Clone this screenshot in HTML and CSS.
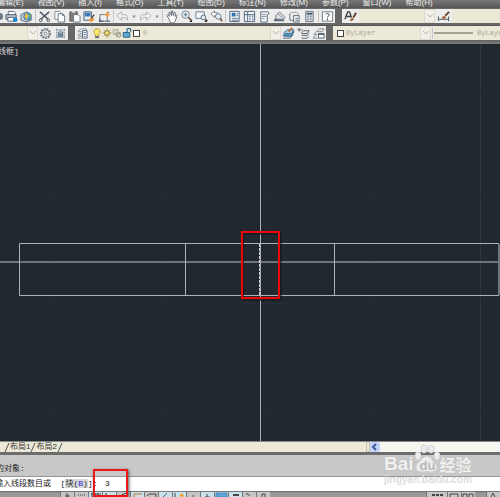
FILE: index.html
```html
<!DOCTYPE html>
<html lang="zh-CN">
<head>
<meta charset="utf-8">
<title>CAD</title>
<link rel="stylesheet" href="styles.css">
</head>
<body>
<svg class="defs" aria-hidden="true">
  <symbol id="print" viewBox="0 0 14 14"><path d="M3.5 5V1.500h6l1.500 1.500V5" fill="#fff" stroke="#536474"/><path d="M1 5h11v5H1z" fill="#bac5d0" stroke="#465564"/><path d="M3 8h7v4H3z" fill="#fff" stroke="#596774"/><circle cx="11" cy="10.500" r="2.500" fill="#1688cf"/></symbol>
  <symbol id="publish" viewBox="0 0 14 14"><path d="M1 5l6-3 5 3v6l-5 2-6-2z" fill="#c6d3df" stroke="#556b81"/><circle cx="8" cy="7" r="4" fill="#48a5d5" stroke="#477493"/><path d="M6 3l3 3-2 5-2-4z" fill="#f2b94a"/><path d="M9 4l3 2-2 3z" fill="#77ba55"/></symbol>
  <symbol id="cut" viewBox="0 0 14 14"><path d="M2 2l9 8M12 2l-9 8" stroke="#4c545d" stroke-width="1.500"/><circle cx="3" cy="11" r="1.500" fill="none" stroke="#4c545d"/><circle cx="11" cy="11" r="1.500" fill="none" stroke="#4c545d"/></symbol>
  <symbol id="copy" viewBox="0 0 14 14"><path d="M2 1.500h5l1 1V10H2z" fill="#fff" stroke="#7c8791"/><path d="M5.500 4h5l2 2v7h-7z" fill="#fff" stroke="#687783"/><path d="M10 4v2h2" fill="none" stroke="#687783"/></symbol>
  <symbol id="paste" viewBox="0 0 14 14"><path d="M2 2h8v10H2z" fill="#857a71" stroke="#625d59"/><path d="M4 1h4v2H4z" fill="#cdd6df"/><path d="M6 5h5l2 2v6H6z" fill="#fff" stroke="#687783"/></symbol>
  <symbol id="match" viewBox="0 0 14 14"><path d="M1 2h8v9H1z" fill="#e7edf2" stroke="#3d5872"/><path d="M2 3h6v4H2z" fill="#3d79b9"/><path d="M5 11l5-3 3 2-4 3z" fill="#ed963c"/><path d="M9 9l3-4" stroke="#494744" stroke-width="1.500"/></symbol>
  <symbol id="block" viewBox="0 0 14 14"><path d="M2 5h8v7H2z" fill="#edf1f6" stroke="#667382"/><path d="M1 12h5M2 9v4M8 5l4-3M9 12h4" stroke="#394f64"/><path d="M10 1l1 3 3 1-3 1-1 3-1-3-3-1 3-1z" fill="#ef9a39"/></symbol>
  <symbol id="undo" viewBox="0 0 14 14"><path d="M1 6l5-4v3h3c3 0 4 2 3 6-1-3-3-3-6-3v3z" fill="#f3f3f3" stroke="#a7afb7"/></symbol>
  <symbol id="redo" viewBox="0 0 14 14"><path d="M13 6L8 2v3H5c-3 0-4 2-3 6 1-3 3-3 6-3v3z" fill="#f3f3f3" stroke="#a7afb7"/></symbol>
  <symbol id="caret" viewBox="0 0 6 14"><path d="M1 6h4L3 9z" fill="#899096"/></symbol>
  <symbol id="hand" viewBox="0 0 14 14"><path d="M4 9L2 6l1-1 2 2-1-4 1-1 2 4V1h1l1 5 1-4 1 1v4l1-2 1 1-2 6-2 2H6z" fill="#fff" stroke="#636a71"/></symbol>
  <symbol id="zoomin" viewBox="0 0 14 14"><circle cx="6" cy="5" r="4" fill="#e9f2f8" stroke="#707e8c"/><path d="M4 5h4M6 3v4" stroke="#526b80"/><path d="M9 8l3 3" stroke="#775f4d" stroke-width="2"/><path d="M10 13h3v-3z" fill="#222"/></symbol>
  <symbol id="zoomwin" viewBox="0 0 14 14"><path d="M1 2h9v7H1z" fill="#f5f8fb" stroke="#66798c"/><circle cx="9" cy="8" r="2.500" fill="#e2eef7" stroke="#53677b"/><path d="M11 10l2 2" stroke="#775f4d" stroke-width="2"/><path d="M10 13h3v-3z" fill="#222"/></symbol>
  <symbol id="zoomprev" viewBox="0 0 14 14"><path d="M1 4l4-3v2h3v3H5v2z" fill="#fff" stroke="#707b84"/><circle cx="9" cy="7" r="3" fill="#e4f0fa" stroke="#64788a"/><path d="M11 9l2 3" stroke="#775f4d" stroke-width="2"/></symbol>
  <symbol id="props" viewBox="0 0 14 14"><path d="M2 1.500h10v11H2z" fill="#f4f7fa" stroke="#4d6178"/><path d="M4 3h4v4H4z" fill="#296fac"/><path d="M9 4h2M9 6h2M4 9h7M4 11h7" stroke="#60758a"/></symbol>
  <symbol id="center" viewBox="0 0 14 14"><path d="M1.500 1.500h11v11h-11zM5 2v10M1 5h11" fill="#f0f4f8" stroke="#4d6178"/><path d="M7 7h1M10 7h1M7 10h1M10 10h1" stroke="#3d6587" stroke-width="2"/></symbol>
  <symbol id="palette" viewBox="0 0 14 14"><path d="M3 2h8l1 2-2 1v8H3z" fill="#f2f4f6" stroke="#5d6c7b"/><path d="M4 5h5M4 7h5M4 9h3" stroke="#8293a2"/></symbol>
  <symbol id="sheets" viewBox="0 0 14 14"><path d="M3 6l4-4 6 6-2 2H3z" fill="#dbe1e6" stroke="#6b7884"/><path d="M5 4l6 5" stroke="#8795a1"/><path d="M1 10c3-2 7 1 11 0v2H1z" fill="#606d79"/></symbol>
  <symbol id="markup" viewBox="0 0 14 14"><path d="M2 4l2-2 2 1 3-1 2 2v3" fill="none" stroke="#737c84" stroke-dasharray="2 1"/><path d="M2 4v7h4M6 6h6v7H6z" fill="#edf2f5" stroke="#5e6a76"/><path d="M8 9h3M8 11h3" stroke="#536e86"/></symbol>
  <symbol id="calc" viewBox="0 0 14 14"><path d="M3 1.500h8v11H3z" fill="#dce2e8" stroke="#65717d"/><path d="M4 4h6" stroke="#405567" stroke-width="2"/><path d="M5 7h1M8 7h1M5 10h1M8 10h1" stroke="#4d5d6c" stroke-width="2"/></symbol>
  <symbol id="help" viewBox="0 0 14 14"><path d="M1.500 2h11v10h-11z" fill="#fff" stroke="#6b7680"/><path d="M5 5c1-2 4-1 4 0 0 2-2 1-2 3M7 9v2" fill="none" stroke="#354758"/></symbol>
  <symbol id="brush" viewBox="0 0 14 14"><path d="M1 10l3-8h2l2 6M3 7h4" fill="none" stroke="#393e43" stroke-width="1.500"/><path d="M6 11l3-3 2 2-3 2z" fill="#a6673a"/><path d="M10 8l3-5" stroke="#653d2a" stroke-width="2"/></symbol>
  <symbol id="dimbrush" viewBox="0 0 14 14"><path d="M1.500 7v5M12.500 7v5M2 10h10" stroke="#434c53"/><path d="M5 8l3-2 2 2-3 2z" fill="#a6673a"/><path d="M9 6l4-4" stroke="#653d2a" stroke-width="2"/></symbol>
  <symbol id="gear" viewBox="0 0 14 14"><circle cx="7" cy="7" r="5" fill="none" stroke="#777f86" stroke-width="2" stroke-dasharray="2 1"/><circle cx="7" cy="7" r="4" fill="#eef0f2" stroke="#777f86"/><circle cx="7" cy="7" r="1.500" fill="#fff" stroke="#6c767e"/></symbol>
  <symbol id="workspace" viewBox="0 0 14 14"><path d="M2 3h10M2 11h10M3 2v10M11 2v10" stroke="#788693" stroke-dasharray="2 1"/><path d="M4 5h6v6H4z" fill="#718598"/><circle cx="7" cy="5" r="2" fill="#a1b2c1"/></symbol>
  <symbol id="layers" viewBox="0 0 14 14"><path d="M2 5l3-3h6v2M2 5h4M2 9l2-2h2M2 9h4M2 12l2-2h2M2 12h4" fill="none" stroke="#8b96a0"/><path d="M7 4h5v8H7z" fill="#fff" stroke="#4d6072"/><path d="M8 6h3M8 8h3M8 10h3" stroke="#6582a0"/></symbol>
  <symbol id="bulb" viewBox="0 0 10 14"><path d="M5 2c-4 0-4 4-2 6v2h4V8c2-2 2-6-2-6z" fill="#ffe56d" stroke="#a89b50"/><path d="M3 11h4" stroke="#586979" stroke-width="2"/></symbol>
  <symbol id="sun" viewBox="0 0 10 14"><path d="M5 1v11M0 6.500h10M1.500 3l7 7M8.500 3l-7 7" stroke="#a99a4c"/><circle cx="5" cy="6.500" r="2.500" fill="#ffe976" stroke="#786f3e"/></symbol>
  <symbol id="freeze" viewBox="0 0 10 14"><path d="M1 3h5v5H1zM4 6h5v4H4z" fill="#e0ddc9" stroke="#a5a497"/><circle cx="7" cy="9" r="2" fill="#d5d3c5" stroke="#96978f"/></symbol>
  <symbol id="lock" viewBox="0 0 10 14"><path d="M5 6V3c0-2 4-2 4 0v2" fill="none" stroke="#32739d" stroke-width="1.500"/><path d="M1 6h7v5H1z" fill="#58add1" stroke="#285e80"/></symbol>
  <symbol id="state" viewBox="0 0 14 14"><path d="M1 9l4-4h8l-3 5H2z" fill="#4b98c8" stroke="#426783"/><path d="M2 6l4-3h7l-3 4H3z" fill="#a7d0e6" stroke="#557487"/><path d="M7 5l4-4" stroke="#b27540" stroke-width="2"/><path d="M1 12h8l3-4" fill="none" stroke="#53636f"/></symbol>
  <symbol id="prevlayer" viewBox="0 0 14 14"><path d="M1 3h5M3 1L1 3l2 2M5 6l2-2h6l-2 3H5zM5 9h6l2-2M5 12h6l2-2" fill="none" stroke="#525f6a"/></symbol>
  <symbol id="layerwin" viewBox="0 0 14 14"><path d="M5 5l3-3h5l-2 3zM2 8l3-3M2 8h4M1 12l3-3M1 12h5" fill="none" stroke="#7d8a95"/><path d="M7 7h6v5H7z" fill="#fff" stroke="#4d5e6c"/><path d="M7 8h6" stroke="#4d5e6c"/></symbol>
</svg>
<div class="app">
  <nav class="menu"><a href="#">编辑(E)</a><a href="#">视图(V)</a><a href="#">插入(I)</a><a href="#">格式(O)</a><a href="#">工具(T)</a><a href="#">绘图(D)</a><a href="#">标注(N)</a><a href="#">修改(M)</a><a href="#">参数(P)</a><a href="#">窗口(W)</a><a href="#">帮助(H)</a></nav>
  <div class="bar">
    <div class="tools standard">
      <i class="edge"></i>
      <button aria-label="Print"><svg><use href="#print"/></svg></button><button aria-label="Publish"><svg><use href="#publish"/></svg></button>
      <i class="sep"></i>
      <button aria-label="Cut"><svg><use href="#cut"/></svg></button><button aria-label="Copy"><svg><use href="#copy"/></svg></button><button aria-label="Paste"><svg><use href="#paste"/></svg></button><button aria-label="Match"><svg><use href="#match"/></svg></button><button aria-label="Block"><svg><use href="#block"/></svg></button>
      <i class="sep"></i>
      <button aria-label="Undo"><svg><use href="#undo"/></svg></button><button class="slim" aria-label="Undo list"><svg><use href="#caret"/></svg></button><button aria-label="Redo"><svg><use href="#redo"/></svg></button><button class="slim" aria-label="Redo list"><svg><use href="#caret"/></svg></button>
      <i class="sep"></i>
      <button aria-label="Pan"><svg><use href="#hand"/></svg></button><button aria-label="Zoom"><svg><use href="#zoomin"/></svg></button><button aria-label="Zoom window"><svg><use href="#zoomwin"/></svg></button><button aria-label="Zoom previous"><svg><use href="#zoomprev"/></svg></button>
      <i class="sep"></i>
      <button aria-label="Properties"><svg><use href="#props"/></svg></button><button aria-label="Design center"><svg><use href="#center"/></svg></button><button aria-label="Palettes"><svg><use href="#palette"/></svg></button><button aria-label="Sheets"><svg><use href="#sheets"/></svg></button><button aria-label="Markup"><svg><use href="#markup"/></svg></button><button aria-label="Calculator"><svg><use href="#calc"/></svg></button>
      <i class="sep"></i>
      <button aria-label="Help"><svg><use href="#help"/></svg></button>
    </div>
    <div class="tools grow">
      <button class="wide" aria-label="Text style"><svg><use href="#brush"/></svg></button>
      <div class="combo text-style"><button class="drop" aria-label="Text styles"><svg viewBox="0 0 8 8"><path d="M1 2l3 3 3-3"/></svg></button></div>
      <button class="wide" aria-label="Dimension style"><svg><use href="#dimbrush"/></svg></button>
      <div class="combo grow"></div>
    </div>
  </div>
  <div class="bar second">
    <div class="tools workspace">
      <div class="combo grow"><button class="drop" aria-label="Workspaces"><svg viewBox="0 0 8 8"><path d="M1 2l3 3 3-3"/></svg></button></div>
      <button aria-label="Settings"><svg><use href="#gear"/></svg></button><button aria-label="Workspace"><svg><use href="#workspace"/></svg></button>
    </div>
    <div class="tools layerbar">
      <button aria-label="Layers"><svg><use href="#layers"/></svg></button>
      <div class="combo grow layer">
        <svg><use href="#bulb"/></svg><svg><use href="#sun"/></svg><svg><use href="#freeze"/></svg><svg><use href="#lock"/></svg><i class="swatch"></i><span>0</span>
        <button class="drop" aria-label="Layer list"><svg viewBox="0 0 8 8"><path d="M1 2l3 3 3-3"/></svg></button>
      </div>
      <button aria-label="Make current"><svg><use href="#state"/></svg></button><button aria-label="Previous layer"><svg><use href="#prevlayer"/></svg></button><button aria-label="Layer states"><svg><use href="#layerwin"/></svg></button>
    </div>
    <div class="tools grow">
      <div class="combo color"><i class="swatch"></i><span>ByLayer</span><button class="drop" aria-label="Colors"><svg viewBox="0 0 8 8"><path d="M1 2l3 3 3-3"/></svg></button></div>
      <i class="sep"></i>
      <div class="combo grow line"><i class="rule"></i><span>ByLayer</span></div>
    </div>
  </div>
  <main class="canvas">
    <span class="view">线框]</span>
    <svg class="drawing" viewBox="0 44 500 397" preserveAspectRatio="xMidYMid slice">
      <path class="grid" d="M53.500 44v397M160.500 44v397M267.500 44v397M373.500 44v397M0 89.500h500M0 196.500h500M0 303.500h500M0 410.500h500"/>
      <path class="grid major" d="M480.500 44v397"/>
      <path class="cross" d="M0 262h500"/>
      <path class="object" d="M499 243.500H19.500V295.500H499M185.500 243v52M334.500 243v52"/>
      <path class="cross" d="M499 244v51"/>
      <path class="object" d="M260.500 44v397"/>
      <path class="picked" d="M259.500 244v51"/>
      <rect class="shade" x="243" y="234" width="38" height="66"/>
      <rect class="mark" x="242" y="232" width="37" height="66"/>
    </svg>
  </main>
  <div class="tabs">
    <svg viewBox="0 0 6 10"><path d="M1 10L5 1"/></svg><a href="#">布局1</a><svg viewBox="0 0 6 10"><path d="M1 10L5 1"/></svg><a href="#">布局2</a><svg viewBox="0 0 6 10"><path d="M1 10L5 1"/></svg>
    <div class="scroll"><i class="grip"></i><button aria-label="Scroll left"><svg viewBox="0 0 8 8"><path d="M5 1L2 4l3 3"/></svg></button></div>
  </div>
  <div class="history">的对象:</div>
  <div class="command"><label for="cmd">输入线段数目或&nbsp; [<b>块(<em>B</em>)</b>]:</label><span class="entry"><input id="cmd" value="3"></span></div>
  <div class="status">
    <button aria-label="Infer"><svg viewBox="0 0 13 5"><path d="M6 1v4M4 4h5"/></svg></button><button aria-label="Snap"><svg viewBox="0 0 13 5"><path d="M3 3h8" stroke-dasharray="1 1"/></svg></button><button aria-label="Grid" class="on"><svg viewBox="0 0 13 5"><path d="M2 2h10M3 1v4M6 1v4M9 1v4"/></svg></button><button aria-label="Ortho" class="on"><svg viewBox="0 0 13 5"><path d="M3 1v4"/></svg></button><button aria-label="Polar"><svg viewBox="0 0 13 5"><path d="M3 4l6-3"/></svg></button><button aria-label="Object snap" class="on"><svg viewBox="0 0 13 5"><path d="M3 5V2h8" stroke="#c7702c"/></svg></button><button aria-label="3D snap"><svg viewBox="0 0 13 5"><path d="M2 4l2-2h7v3"/></svg></button><button aria-label="Tracking" class="on"><svg viewBox="0 0 13 5"><path d="M4 5l4-4" stroke="#426783"/></svg></button><button aria-label="UCS" class="on"><svg viewBox="0 0 13 5"><path d="M2 1v4"/><path d="M6 4l3-3 2 3-2 1z" fill="#ed9f26" stroke="none"/></svg></button><button aria-label="Dynamic"><svg viewBox="0 0 13 5"><path d="M6 3v2"/></svg></button><button aria-label="Line weight" class="on"><svg viewBox="0 0 13 5"><path d="M6 2v3M4 5h5"/></svg></button><button aria-label="Transparency" class="on"><svg viewBox="0 0 13 5"><path d="M1 1h11v4H1z" fill="#5da4db" stroke="#4685bd"/></svg></button><button aria-label="Quick properties" class="on"><svg viewBox="0 0 13 5"><path d="M4 3h6" stroke-width="2"/></svg></button><button aria-label="Cycling"><svg viewBox="0 0 13 5"><path d="M3 2h2l2 2"/></svg></button><button aria-label="Monitor"><svg viewBox="0 0 13 5"><path d="M5 5V2h3v3"/></svg></button>
    <i class="fill"></i>
    <button class="model" aria-label="Model"><svg viewBox="0 0 13 5"><path d="M1 3h11" stroke-width="2" stroke-dasharray="3 1"/></svg></button><button aria-label="Layout"><svg viewBox="0 0 13 5"><path d="M2 5V2h8v3"/></svg></button><button aria-label="Views"><svg viewBox="0 0 13 5"><path d="M1 5V2h4v3M7 5V2h4v3"/></svg></button><i class="gap"></i><button aria-label="Scale"><svg viewBox="0 0 13 5"><path d="M4 5l2-4 2 4"/></svg></button>
  </div>
  <div class="watermark"><div class="logo"><span>Bai</span><span class="paw"><svg viewBox="0 0 26 30"><ellipse cx="4" cy="12" rx="3" ry="4"/><ellipse cx="10" cy="5" rx="3" ry="4"/><ellipse cx="17" cy="5" rx="3" ry="4"/><ellipse cx="23" cy="12" rx="3" ry="4"/><path d="M13 12c4 0 5 5 8 7 4 4 2 9-3 9-3 0-7-1-10 0-6 0-8-5-4-9 3-2 5-7 9-7z"/></svg><b>du</b></span><span class="cn">经验</span></div><div class="url">jingyan.baidu.com</div></div>
</div>
</body>
</html>
```
FILE: styles.css
```css
* { box-sizing: border-box; }
body { margin: 0; background: #666; font-family: "Liberation Sans", "Noto Sans CJK SC", sans-serif; }
i, em { font-style: normal; }
a { color: inherit; text-decoration: none; }
button { flex: none; padding: 0; border: 0; background: none; display: flex; align-items: center; justify-content: center; }
.defs { display: none; }
.app { position: relative; display: flex; flex-direction: column; height: 100vh; overflow: hidden; }

.menu { flex: none; display: flex; align-items: flex-end; gap: 14px; height: 8px; padding: 0 0 1px 2px; margin-left: -5px; overflow: hidden; background: linear-gradient(#777, #555); color: #eee; font-size: 8px; line-height: 8px; white-space: nowrap; }

.bar { flex: none; display: flex; gap: 7px; height: 18px; padding: 1px 0 2px; background: #686868; border-bottom: 1px solid #555; }
.bar.second { padding: 0 0 2px; border-bottom: 2px solid #777; }
.tools { flex: none; display: flex; align-items: stretch; background: #ededed; min-width: 0; overflow: hidden; }
.tools.grow, .combo.grow { flex: 1 1 0; }
.tools button { width: 15px; }
.tools button > svg { width: 13px; height: 13px; }
.tools .slim { width: 8px; }
.tools .wide { width: 17px; }
.standard { width: 335px; }
.edge { flex: none; width: 3px; height: 7px; margin: 4px 1px 0 0; background: #6d7986; border-radius: 0 4px 4px 0; }
.sep { flex: none; width: 1px; margin: 1px; background: #c4c4c4; }
.combo { display: flex; align-items: center; background: #ece9d8; color: #aaa797; font: 7px "Liberation Mono", monospace; overflow: hidden; }
.combo .drop { width: 11px; align-self: stretch; margin-left: auto; background: #f1efe6; border: 1px solid #dedbce; }
.combo .drop svg { width: 8px; height: 8px; fill: none; stroke: #b9b7ad; stroke-width: 1; }
.text-style { width: 76px; }
.workspace { width: 68px; }
.layerbar { width: 251px; }
.layer { padding-left: 2px; }
.layer > svg { width: 10px; height: 13px; }
.layer > span { padding-left: 3px; }
.swatch { flex: none; width: 7px; height: 7px; margin-left: 1px; background: #fff; border: 1px solid #444; }
.color { width: 98px; padding-left: 3px; gap: 2px; }
.line { gap: 4px; }
.rule { flex: none; width: 39px; height: 2px; background: #a5a397; }

.canvas { position: relative; flex: 1 1 0; min-height: 0; background: #222830; overflow: hidden; }
.drawing { display: block; width: 100%; height: 100%; fill: none; }
.view { position: absolute; top: 2px; left: -2px; color: #ddd; font: 8px/12px "Liberation Mono", "Noto Sans CJK SC", monospace; }
.grid { stroke: #252c35; }
.grid.major { stroke: #2d3541; }
.object { stroke: #afb3b6; }
.cross { stroke: #70757a; stroke-width: 2; }
.picked { stroke: #d5d7d9; stroke-dasharray: 3 1; }
.shade { stroke: #11151a; stroke-width: 2; opacity: .6; }
.mark { stroke: #f00808; stroke-width: 2; }

.tabs { flex: none; display: flex; align-items: stretch; height: 11px; padding-left: 4px; background: #ece9d8; border-top: 1px solid #888; color: #333; font: 8px/10px "Liberation Sans", "Noto Sans CJK SC", sans-serif; }
.tabs svg { width: 6px; height: 10px; fill: none; stroke: #555; }
.scroll { display: flex; width: 27%; margin-left: auto; background: #f7f6f0; }
.grip { width: 4px; border: 1px solid #c5c2b3; background: #ece9d8; }
.scroll button { width: 10px; background: #c2d3fc; border-radius: 2px; }
.tabs .scroll svg { width: 8px; height: 8px; stroke: #405b91; stroke-width: 2; }

.history { flex: none; height: 25px; padding: 8px 0 0; margin-left: -4px; background: #c8c8c8; border-top: 3px solid #6d6d6d; border-bottom: 1px solid #969696; color: #222; font: 8px/12px "Liberation Mono", "Noto Sans CJK SC", monospace; }
.command { flex: none; display: flex; align-items: center; height: 14px; background: #fff; color: #222; font: 8px/12px "Liberation Mono", "Noto Sans CJK SC", monospace; white-space: nowrap; }
.command label { width: 100px; margin-left: -5px; }
.command b { font-weight: 400; background: #d6d6d6; }
.command em { color: #2a2ad8; }
.entry { position: relative; width: 32px; }
.entry::after { content: ""; position: absolute; top: -9px; bottom: -7px; left: -2px; right: -1px; border: 2px solid #e81818; box-shadow: 1px 1px 3px #555; pointer-events: none; }
.entry input { display: block; width: 100%; height: 12px; padding: 0 0 0 10px; border: 0; background: none; color: #222; font: inherit; }

.status { flex: none; display: flex; height: 6px; padding-left: 60px; background: linear-gradient(#666, #999 2px); overflow: hidden; }
.status button { width: 14px; height: 6px; border-left: 1px solid #777; border-top: 1px solid #777; background: #c5c5c5; }
.status .on { background: #c7e2ea; }
.status svg { width: 13px; height: 5px; fill: none; stroke: #444; }
.status .fill { flex: 1; }
.status .gap { width: 11px; }
.status .model { width: 21px; }

.watermark { position: absolute; right: 26px; bottom: 12px; width: 90px; color: #f1f1f1; pointer-events: none; text-shadow: 0 0 1px #aaa; }
.logo { display: flex; align-items: flex-end; height: 31px; font: bold 19px/20px "Liberation Sans", sans-serif; }
.paw { position: relative; flex: none; width: 26px; height: 30px; }
.paw svg { display: block; width: 26px; height: 30px; fill: #ededed; stroke: #d0d0d0; }
.paw b { position: absolute; left: 6px; bottom: 1px; color: #b8b8b8; font-size: 13px; line-height: 14px; text-shadow: none; }
.cn { font: bold 16px/20px "Noto Sans CJK SC", sans-serif; }
.url { color: #ddd; font: bold 10px/11px "Liberation Sans", sans-serif; text-shadow: none; }
```
